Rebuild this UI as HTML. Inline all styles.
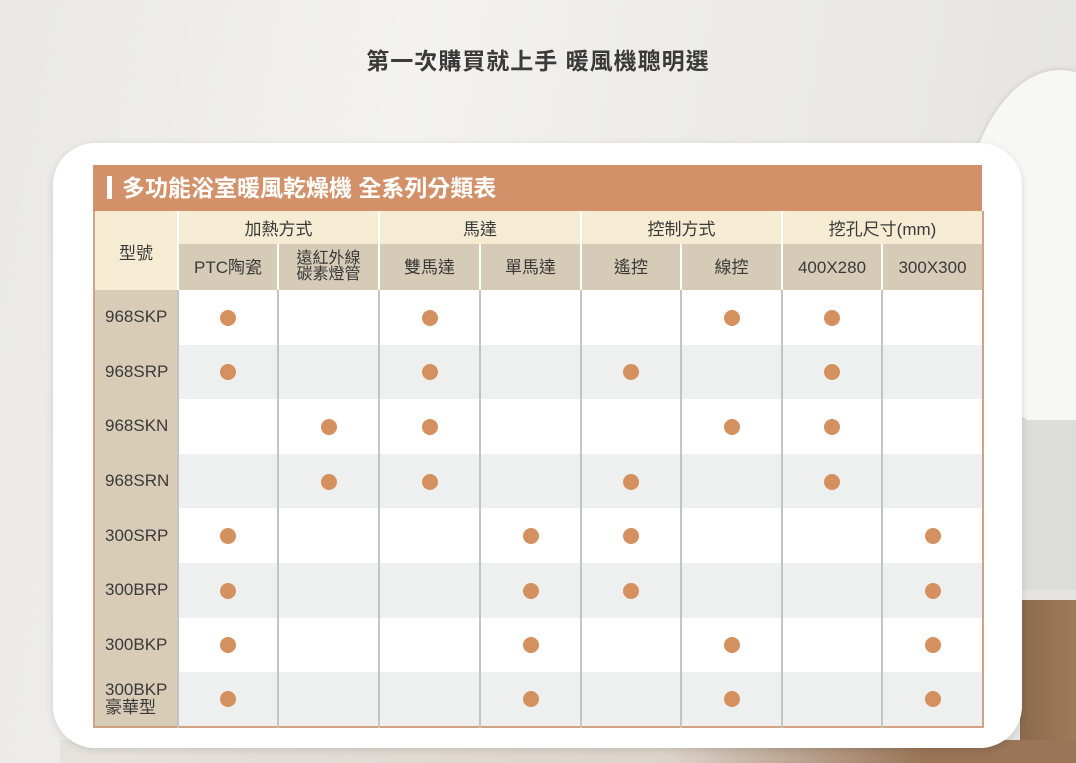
<!DOCTYPE html>
<html><head><meta charset="utf-8"><style>
*{margin:0;padding:0;box-sizing:border-box}
body{width:1076px;height:763px;overflow:hidden;position:relative;font-family:"Liberation Sans","Noto Sans CJK TC",sans-serif;
background:linear-gradient(100deg,#e9e8e6 0%,#f3f2f0 35%,#ecebe9 60%,#e4e3e1 100%);}
.wood{position:absolute;left:1020px;top:600px;width:56px;height:163px;background:linear-gradient(90deg,#8a6a4e,#a07a58);}
.wood2{position:absolute;left:60px;top:740px;width:1016px;height:23px;background:linear-gradient(90deg,#e6e2de,#ddd3ca 60%,#9a7557 85%);}
.mirror{position:absolute;left:960px;top:70px;width:200px;height:360px;border-radius:50%;background:#f7f7f6;box-shadow:0 0 6px rgba(0,0,0,.15)}
.tile{position:absolute;left:1020px;top:420px;width:56px;height:170px;background:#dcdcda}
h1{position:absolute;top:42px;left:0;width:1076px;text-align:center;font-size:23px;font-weight:bold;color:#3a3a3a;letter-spacing:1px}
.card{position:absolute;left:53px;top:143px;width:969px;height:605px;background:#fff;border-radius:42px;box-shadow:0 2px 8px rgba(0,0,0,.12)}
.title{position:absolute;left:93px;top:165px;width:889px;height:46px;background:#d3916a;color:#fff;font-size:23px;font-weight:bold;line-height:46px;padding-left:14px}
.title b{display:inline-block;width:5px;height:23px;background:#fff;vertical-align:-3px;margin-right:10px}
table{position:absolute;left:93px;top:211px;width:889px;border-collapse:collapse;table-layout:fixed;font-size:17px;color:#3a3a3a;border-right:2px solid #d3a184;border-bottom:2px solid #d3a184;border-left:2px solid #d3a184}
td{text-align:center;border-left:2px solid #c4c4c4;padding:0}
.h1 td{height:33px;background:#f6ecd4;border-left:2px solid #fff}
.h2 td{height:46px;background:#d6cbb6;border-left:2px solid #fff;line-height:1}
td.m{background:#f6ecd4;border-left:none}
td.k{background:#d8ccb7;text-align:left;padding-left:10px;border-left:none}
tr.d td{height:54.6px}
tr.d:nth-child(even) td:not(.k){background:#eef0ef}
tr.d:nth-child(odd) td:not(.k){background:#fff}
i{display:inline-block;width:16px;height:16px;border-radius:50%;background:#d4905f;vertical-align:middle}
.s{font-size:16px;line-height:15px}
</style></head><body>
<div class="mirror"></div><div class="tile"></div><div class="wood"></div><div class="wood2"></div>
<h1>第一次購買就上手 暖風機聰明選</h1>
<div class="card"></div>
<div class="title"><b></b>多功能浴室暖風乾燥機 全系列分類表</div>
<table>
<colgroup><col style="width:84px"><col style="width:100px"><col style="width:101px"><col style="width:101px"><col style="width:101px"><col style="width:100px"><col style="width:101px"><col style="width:100px"><col style="width:101px"></colgroup>
<tr class="h1"><td class="m" rowspan="2" style="vertical-align:top;padding-top:28px">型號</td><td colspan="2">加熱方式</td><td colspan="2">馬達</td><td colspan="2">控制方式</td><td colspan="2">挖孔尺寸(mm)</td></tr>
<tr class="h2"><td>PTC陶瓷</td><td class="s">遠紅外線<br>碳素燈管</td><td>雙馬達</td><td>單馬達</td><td>遙控</td><td>線控</td><td>400X280</td><td>300X300</td></tr>
<tr class="d"><td class="k">968SKP</td><td><i></i></td><td></td><td><i></i></td><td></td><td></td><td><i></i></td><td><i></i></td><td></td></tr>
<tr class="d"><td class="k">968SRP</td><td><i></i></td><td></td><td><i></i></td><td></td><td><i></i></td><td></td><td><i></i></td><td></td></tr>
<tr class="d"><td class="k">968SKN</td><td></td><td><i></i></td><td><i></i></td><td></td><td></td><td><i></i></td><td><i></i></td><td></td></tr>
<tr class="d"><td class="k">968SRN</td><td></td><td><i></i></td><td><i></i></td><td></td><td><i></i></td><td></td><td><i></i></td><td></td></tr>
<tr class="d"><td class="k">300SRP</td><td><i></i></td><td></td><td></td><td><i></i></td><td><i></i></td><td></td><td></td><td><i></i></td></tr>
<tr class="d"><td class="k">300BRP</td><td><i></i></td><td></td><td></td><td><i></i></td><td><i></i></td><td></td><td></td><td><i></i></td></tr>
<tr class="d"><td class="k">300BKP</td><td><i></i></td><td></td><td></td><td><i></i></td><td></td><td><i></i></td><td></td><td><i></i></td></tr>
<tr class="d"><td class="k" style="line-height:18px">300BKP<br>豪華型</td><td><i></i></td><td></td><td></td><td><i></i></td><td></td><td><i></i></td><td></td><td><i></i></td></tr>
</table>
</body></html>
